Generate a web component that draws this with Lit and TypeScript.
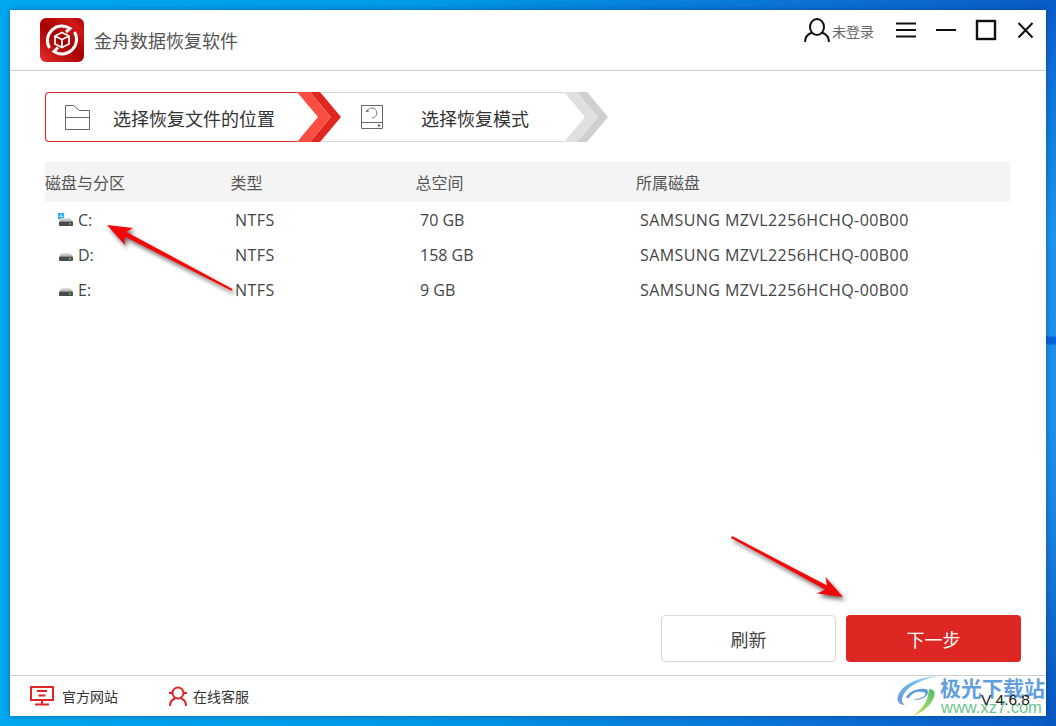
import { LitElement, html, css, svg } from "lit";
import { customElement } from "lit/decorators.js";

const disks = [
  { name: "C:", sys: true, type: "NTFS", size: "70 GB", disk: "SAMSUNG MZVL2256HCHQ-00B00" },
  { name: "D:", sys: false, type: "NTFS", size: "158 GB", disk: "SAMSUNG MZVL2256HCHQ-00B00" },
  { name: "E:", sys: false, type: "NTFS", size: "9 GB", disk: "SAMSUNG MZVL2256HCHQ-00B00" },
];

const chevron = (light: string, dark: string) => html`<svg class="chev" width="45" height="50" viewBox="0 0 45 50">
  <polygon fill=${dark} points="13,0 23,0 44,25 23,50 13,50 34,25" />
  <polygon fill=${light} points="0,0 13,0 34,25 13,50 0,50 21,25" />
</svg>`;

const diskIcon = (sys: boolean) => html`<svg class="disk" width="18" height="16" viewBox="0 0 18 16">
  <defs><linearGradient id="dtop" x1="0" y1="0" x2="0" y2="1"><stop offset="0" stop-color="#e8e8e8"/><stop offset="1" stop-color="#a8a8a8"/></linearGradient></defs>
  ${sys ? svg`<g fill="#1aa7f0"><rect x="0" y="0" width="2.8" height="2.8"/><rect x="3.400" y="0" width="2.800" height="2.800"/><rect x="0" y="3.400" width="2.800" height="2.800"/><rect x="3.400" y="3.400" width="2.800" height="2.800"/></g>` : ""}
  <path d="M3.500 5h8.500l3 3.500H1z" fill="url(#dtop)"/>
  <rect x="1" y="8.500" width="14" height="4.500" rx="1" fill="#4a4a4a"/>
  <rect x="11" y="10" width="2" height="1.600" fill="#3fd04a"/>
</svg>`;

@customElement("app-root")
export class AppRoot extends LitElement {
  static styles = css`
    :host {
      display: block;
      position: relative;
      width: 1056px;
      height: 726px;
      overflow: hidden;
      padding: 10px;
      box-sizing: border-box;
      background:
        linear-gradient(180deg, #0a5cc8 0, #0f78d8 100px, #1c94ea 230px, #1f90e8 336px, #0a62e0 337px, #0a62e0 344px, #1f90e8 345px, #1f90e8 430px, #1a84e0 520px, #0a5cc4 680px, #0a58c0 726px) right top / 10px 100% no-repeat,
        linear-gradient(90deg, #00a8f0 0%, #009ae8 40%, #0a78d8 70%, #0a5cc8 100%);
      font-family: "Noto Sans CJK SC", "Noto Sans", sans-serif;
      color: #333;
    }
    .window {
      width: 1036px;
      height: 706px;
      background: #fff;
      display: flex;
      flex-direction: column;
      box-shadow: 0 0 6px rgba(0, 30, 90, 0.45);
    }
    .title {
      height: 61px;
      flex: none;
      box-sizing: border-box;
      border-bottom: 1px solid #cfcfcf;
      display: flex;
      align-items: flex-start;
      padding: 8px 10px 0 30px;
    }
    .logo { flex: none; display: block; }
    .app-name {
      margin: 9px 0 0 10px;
      font-size: 18px;
      line-height: 26px;
      color: #555;
    }
    .title-right { margin-left: auto; display: flex; align-items: flex-start; }
    .user { display: block; margin: 0; }
    .login { font-size: 14px; line-height: 20px; color: #666; margin: 3px 22px 0 1px; }
    .winbtn { display: block; }
    .main {
      flex: 1;
      display: flex;
      flex-direction: column;
      padding: 21px 25px 0 35px;
      min-height: 0;
    }
    .steps { display: flex; height: 50px; flex: none; align-items: stretch; }
    .step {
      box-sizing: border-box;
      display: flex;
      align-items: center;
      height: 50px;
      font-size: 18px;
      color: #333;
    }
    .step-text { padding-top: 2px; }
    .step-a {
      width: 252px;
      border: 1px solid #e02525;
      border-right: 0;
      border-radius: 4px 0 0 4px;
      padding-left: 19px;
    }
    .step-b {
      width: 243px;
      margin-left: -21px;
      border-top: 1px solid #d8d8d8;
      border-bottom: 1px solid #d8d8d8;
      padding-left: 40px;
    }
    .step-icon { display: block; flex: none; margin-right: 23px; }
    .step-b .step-icon { margin-right: 38px; }
    .chev { display: block; flex: none; position: relative; }
    .tbl { margin-top: 20px; width: 965px; flex: none; }
    .row {
      display: grid;
      grid-template-columns: 185px 185px 220px 1fr;
      align-items: center;
      height: 35px;
      font-size: 16px;
      font-family: "Open Sans", "Noto Sans CJK SC", sans-serif;
      color: #444;
    }
    .row > div { padding-left: 5px; }
    .row > .name { padding-left: 13px; display: flex; align-items: center; }
    .row > .caps { letter-spacing: 0.42px; }
    .disk { display: block; margin-right: 2px; margin-top: 2px; }
    .head {
      height: 40px;
      grid-template-columns: 185.5px 185px 220.5px 1fr;
      background: #f4f4f4;
      font-family: "Noto Sans CJK SC", sans-serif;
      color: #555;
    }
    .head > div { padding-left: 0; }
    .actions {
      margin-top: auto;
      display: flex;
      justify-content: flex-end;
      gap: 10px;
      margin-bottom: 13px;
      width: 976px;
    }
    .btn {
      width: 175px;
      height: 47px;
      box-sizing: border-box;
      border-radius: 4px;
      font: 18px "Noto Sans CJK SC", sans-serif;
      display: flex;
      align-items: center;
      justify-content: center;
    }
    .btn-plain { background: #fff; border: 1px solid #d9d9d9; color: #444; }
    .btn-main { background: #de2622; border: 0; color: #fff; }
    .foot {
      height: 41px;
      flex: none;
      box-sizing: border-box;
      border-top: 1px solid #cfcfcf;
      display: flex;
      align-items: center;
      padding: 0 16px 0 20px;
      font-size: 14px;
      color: #333;
    }
    .link { display: flex; align-items: center; }
    .link svg { display: block; margin-right: 8px; }
    .link-a { width: 139px; }
    .link-b svg { margin-right: 6px; }
    .ver { margin-left: auto; font: 15.5px "Liberation Sans", sans-serif; position: relative; z-index: 2; margin-top: 8px; color: #222; }
    .overlay { position: absolute; left: 0; top: 0; pointer-events: none; }
    .arrow { filter: drop-shadow(2px 3px 2px rgba(50, 30, 30, 0.7)); }
    .mark { position: absolute; left: 896px; top: 676px; width: 150px; height: 40px; }
    .mark svg { position: absolute; left: 0; top: 0; }
    .mark-cn {
      position: absolute;
      left: 44px;
      top: 0;
      font: 700 21px/22px "Noto Sans CJK SC", sans-serif;
      color: #639fdc;
      white-space: nowrap;
    }
    .mark-en {
      position: absolute;
      left: 45px;
      top: 22px;
      font: 400 16.5px/18px "Liberation Sans", sans-serif;
      color: #6cc48c;
      white-space: nowrap;
    }
  `;

  render() {
    return html`
      <div class="window">
        <div class="title">
          <svg class="logo" width="44" height="44" viewBox="0 0 44 44">
            <defs>
              <linearGradient id="lg" x1="0.1" y1="1" x2="0.9" y2="0">
                <stop offset="0" stop-color="#e02a2a" /><stop offset="0.5" stop-color="#a60000" /><stop offset="0.85" stop-color="#d01818" /><stop offset="1" stop-color="#b00808" />
              </linearGradient>
            </defs>
            <rect width="44" height="44" rx="6" fill="url(#lg)" />
            <path d="M9.500 30A14.500 14.500 0 0 1 30 10.500L26 14" fill="none" stroke="#fff" stroke-width="3" />
            <path d="M34.500 14A14.500 14.500 0 0 1 14 33.500L18 29.500" fill="none" stroke="#fff" stroke-width="3" />
            <path d="M22 14.500l7 3.500v8l-7 3.500-7-3.500v-8zM15 18l7 3.500 7-3.500M22 21.500v8" fill="none" stroke="#fff" stroke-width="1.800" stroke-linejoin="round" />
          </svg>
          <div class="app-name">金舟数据恢复软件</div>
          <div class="title-right">
            <svg class="user" width="28" height="26" viewBox="0 0 28 26">
              <ellipse cx="14" cy="9" rx="7" ry="8" fill="none" stroke="#111" stroke-width="2" />
              <path d="M2 24c0-5 3-8 7-9.500M26 24c0-5-3-8-7-9.500" fill="none" stroke="#111" stroke-width="2" />
            </svg>
            <div class="login">未登录</div>
            <svg class="winbtn" width="140" height="30" viewBox="0 0 140 30">
              <g stroke="#111" stroke-width="2" fill="none">
                <path d="M0 5.500h20M0 12h20M0 18.500h20" />
                <path d="M40 12h20" />
                <rect x="81" y="3" width="18" height="18" stroke-width="2.400" />
                <path d="M122.500 5l14 14.500M136.500 5l-14 14.500" />
              </g>
            </svg>
          </div>
        </div>

        <div class="main">
          <div class="steps">
            <div class="step step-a">
              <svg class="step-icon" width="25" height="25" viewBox="0 0 25 25">
                <path d="M.5 24.500V.5h8l6 5h10v19zM.5 12.500h24" fill="none" stroke="#666" stroke-width="1" />
              </svg>
              <span class="step-text">选择恢复文件的位置</span>
            </div>
            ${chevron("#fb4e42", "#df2720")}
            <div class="step step-b">
              <svg class="step-icon" width="22" height="24" viewBox="0 0 22 24">
                <path d="M.5.500h21v23H.5zM.5 17.500h21" fill="none" stroke="#666" stroke-width="1" />
                <circle cx="18" cy="20.500" r="1.300" fill="#666" />
                <path d="M6.500 5.500A5 5 0 1 1 11 13" fill="none" stroke="#777" stroke-width="1" />
                <path d="M4.500 7l2-3 1.500 3z" fill="#777" />
              </svg>
              <span class="step-text">选择恢复模式</span>
            </div>
            ${chevron("#e0e0e0", "#cfcfcf")}
          </div>

          <div class="tbl">
            <div class="row head">
              <div>磁盘与分区</div><div>类型</div><div>总空间</div><div>所属磁盘</div>
            </div>
            ${disks.map(
              (d) => html`<div class="row">
                <div class="name">${diskIcon(d.sys)}${d.name}</div>
                <div class="caps">${d.type}</div>
                <div>${d.size}</div>
                <div class="caps">${d.disk}</div>
              </div>`,
            )}
          </div>

          <div class="actions">
            <div class="btn btn-plain">刷新</div>
            <div class="btn btn-main">下一步</div>
          </div>
        </div>

        <div class="foot">
          <div class="link link-a">
            <svg width="24" height="20" viewBox="0 0 24 20">
              <path d="M1 1h22v13H1zM12 14v4M5 18.500h14M7 5h10M8.500 9.500h7" fill="none" stroke="#e02525" stroke-width="2" />
            </svg>
            官方网站
          </div>
          <div class="link link-b">
            <svg width="18" height="20" viewBox="0 0 18 20">
              <circle cx="9" cy="7" r="5.500" fill="none" stroke="#e02525" stroke-width="2" />
              <path d="M1 20c0-4 2-6.500 5-7.500M17 20c0-4-2-6.500-5-7.500M0 7h3M15 7h3" fill="none" stroke="#e02525" stroke-width="2" />
            </svg>
            在线客服
          </div>
          <div class="ver">V 4.6.8</div>
        </div>
      </div>

      <svg class="overlay arrow" width="1056" height="726" viewBox="0 0 1056 726">
        <polygon fill="#f20808" points="107,225 133,228 126.500,232 232.500,289 231.500,290.800 124.500,236.500 125,245" />
        <polygon fill="#f20808" points="843,597 825.500,577 827,585.500 732,536 731,538 825,589.500 817,593.500" />
      </svg>

      <div class="mark">
        <svg width="46" height="40" viewBox="0 0 46 40">
          <defs>
            <linearGradient id="sw" x1="1" y1="0" x2="0" y2="0.700">
              <stop offset="0" stop-color="#d8f0fa" /><stop offset="0.500" stop-color="#6cc0ee" /><stop offset="1" stop-color="#6f9fd8" />
            </linearGradient>
            <linearGradient id="sg" x1="0.800" y1="0" x2="0.200" y2="1">
              <stop offset="0" stop-color="#58bf6e" /><stop offset="0.700" stop-color="#9fd868" /><stop offset="1" stop-color="#f0e27a" />
            </linearGradient>
          </defs>
          <path d="M44 0C24 0 6 8 2 20c-2 6 2 9 7 9-3-2-4-5-2-9C11 10 26 3 44 0z" fill="url(#sw)" />
          <path d="M10 22c2-6 11-10 19-9 3 0 4 3 2 6-3 4-10 6-14 4 5 0 10-1 12-4 1-2 0-3-3-3-6-1-11 2-13 6z" fill="#5b9bd8" />
          <path d="M33 13c7 0 7 6 3 12-4 7-12 13-20 15 6-4 13-10 15-17 1-4 2-8 2-10z" fill="url(#sg)" />
        </svg>
        <div class="mark-cn">极光下载站</div>
        <div class="mark-en">www.xz7.com</div>
      </div>
    `;
  }
}
